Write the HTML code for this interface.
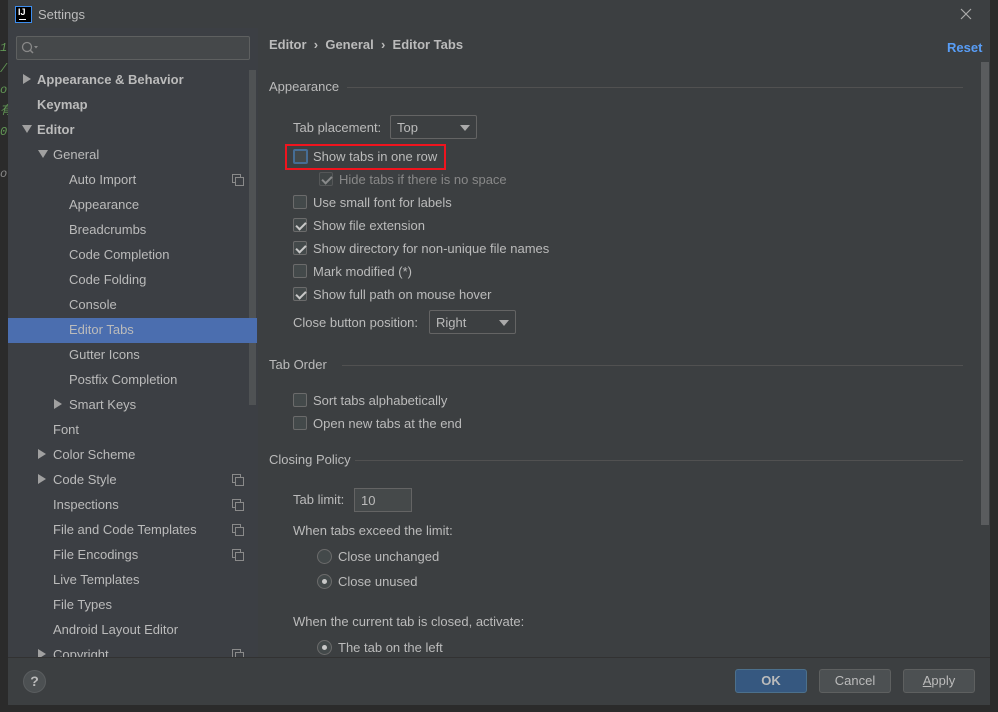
<!DOCTYPE html>
<html><head><meta charset="utf-8"><style>
*{margin:0;padding:0;box-sizing:border-box}
body{width:998px;height:712px;background:#2b2b2b;position:relative;overflow:hidden;font-family:"Liberation Sans","Noto Sans CJK SC",sans-serif;font-size:13px;color:#bbbbbb}
.a{position:absolute;white-space:nowrap}
.cb{position:absolute;width:14px;height:14px;border:1px solid #6b6b6b;border-radius:2px;background:#43494a}
.cb.on::after{content:"";position:absolute;left:4px;top:1px;width:4px;height:8px;border:solid #c8c8c8;border-width:0 2px 2px 0;transform:rotate(45deg)}
.rb{position:absolute;width:15px;height:15px;border:1px solid #6b6b6b;border-radius:50%;background:#43494a}
.rb.on::after{content:"";position:absolute;left:4px;top:4px;width:5px;height:5px;border-radius:50%;background:#c8c8c8}
.tri{position:absolute;width:0;height:0}
.tr{border-left:8px solid #a0a0a0;border-top:5px solid transparent;border-bottom:5px solid transparent}
.td{border-top:8px solid #a0a0a0;border-left:5px solid transparent;border-right:5px solid transparent}
.hd{position:absolute;height:1px;background:#515151}
.cp{position:absolute;width:9px;height:9px;border:1px solid #8a8a8a}
.cp::after{content:"";position:absolute;left:2px;top:2px;width:7px;height:7px;border:1px solid #8a8a8a;background:#3c3f44}
.row{position:absolute;height:25px;line-height:25px;white-space:nowrap}
</style></head><body>
<div class="a" style="left:0;top:38px;font-family:'Liberation Mono',monospace;color:#629755;font-style:italic;font-size:12px;line-height:21px">1<br>/<br>o<br>有<br>0<br><br><span style="color:#888">o</span></div>
<div class="a" style="left:8px;top:0;width:982px;height:705px;background:#3c3f41"></div>
<div class="a" style="left:15px;top:6px;width:17px;height:17px;background:#000;border:1px solid #3d8ef0"><div class="a" style="left:2px;top:0;color:#fff;font-size:9px;font-weight:bold">IJ</div><div class="a" style="left:3px;top:12px;width:7px;height:1px;background:#fff"></div></div>
<div class="a" style="left:38px;top:7px;font-size:13px">Settings</div>
<svg class="a" style="left:960px;top:8px" width="12" height="12"><path d="M1 1L11 11M11 1L1 11" stroke="#aaa" stroke-width="1.2"/></svg>
<div class="a" style="left:8px;top:28px;width:250px;height:629px;background:#3c3f44"></div>
<div class="a" style="left:16px;top:36px;width:234px;height:24px;border:1px solid #5e6060;border-radius:2px;background:#45484a"></div>
<svg class="a" style="left:21px;top:41px" width="18" height="14"><circle cx="6" cy="6" r="4.5" fill="none" stroke="#888" stroke-width="1.3"/><line x1="9" y1="9" x2="12" y2="12" stroke="#888" stroke-width="1.5"/><path d="M13 5h4l-2 2.5z" fill="#888"/></svg>
<div class="a" style="left:249px;top:70px;width:7px;height:335px;background:#4f5254"></div>
<div class="a" style="left:8px;top:318px;width:249px;height:25px;background:#4b6eaf"></div>
<div class="tri tr" style="left:23px;top:74px"></div>
<div class="row" style="left:37px;top:67px;font-weight:bold">Appearance &amp; Behavior</div>
<div class="row" style="left:37px;top:92px;font-weight:bold">Keymap</div>
<div class="tri td" style="left:22px;top:125px"></div>
<div class="row" style="left:37px;top:117px;font-weight:bold">Editor</div>
<div class="tri td" style="left:38px;top:150px"></div>
<div class="row" style="left:53px;top:142px">General</div>
<div class="row" style="left:69px;top:167px">Auto Import</div>
<div class="row" style="left:69px;top:192px">Appearance</div>
<div class="row" style="left:69px;top:217px">Breadcrumbs</div>
<div class="row" style="left:69px;top:242px">Code Completion</div>
<div class="row" style="left:69px;top:267px">Code Folding</div>
<div class="row" style="left:69px;top:292px">Console</div>
<div class="row" style="left:69px;top:317px">Editor Tabs</div>
<div class="row" style="left:69px;top:342px">Gutter Icons</div>
<div class="row" style="left:69px;top:367px">Postfix Completion</div>
<div class="row" style="left:69px;top:392px">Smart Keys</div>
<div class="row" style="left:53px;top:417px">Font</div>
<div class="row" style="left:53px;top:442px">Color Scheme</div>
<div class="row" style="left:53px;top:467px">Code Style</div>
<div class="row" style="left:53px;top:492px">Inspections</div>
<div class="row" style="left:53px;top:517px">File and Code Templates</div>
<div class="row" style="left:53px;top:542px">File Encodings</div>
<div class="row" style="left:53px;top:567px">Live Templates</div>
<div class="row" style="left:53px;top:592px">File Types</div>
<div class="row" style="left:53px;top:617px">Android Layout Editor</div>
<div class="row" style="left:53px;top:642px">Copyright</div>
<div class="tri tr" style="left:54px;top:399px"></div>
<div class="tri tr" style="left:38px;top:449px"></div>
<div class="tri tr" style="left:38px;top:474px"></div>
<div class="tri tr" style="left:38px;top:649px"></div>
<div class="cp" style="left:232px;top:174px"></div>
<div class="cp" style="left:232px;top:474px"></div>
<div class="cp" style="left:232px;top:499px"></div>
<div class="cp" style="left:232px;top:524px"></div>
<div class="cp" style="left:232px;top:549px"></div>
<div class="cp" style="left:232px;top:649px"></div>
<div class="a" style="left:8px;top:657px;width:250px;height:10px;background:#3c3f41"></div>
<div class="a" style="left:269px;top:37px;font-weight:bold">Editor &nbsp;›&nbsp; General &nbsp;›&nbsp; Editor Tabs</div>
<div class="a" style="left:947px;top:40px;font-weight:bold;color:#589df6">Reset</div>
<div class="a" style="left:981px;top:62px;width:8px;height:463px;background:#5a5c5e"></div>
<div class="a" style="left:269px;top:79px">Appearance</div><div class="hd" style="left:347px;top:87px;width:616px"></div>
<div class="a" style="left:293px;top:120px">Tab placement:</div>
<div class="a" style="left:390px;top:115px;width:87px;height:24px;border:1px solid #646464;border-radius:2px;background:#3c3f41;padding:4px 6px">Top</div>
<div class="tri td" style="left:460px;top:125px;border-top-color:#aaa;border-top-width:6px"></div>
<div class="a" style="left:285px;top:144px;width:161px;height:26px;border:2px solid #f0141e"></div>
<div class="cb" style="left:293px;top:149px;border-color:#466d94;border-width:2px;width:15px;height:15px"></div>
<div class="a" style="left:313px;top:149px">Show tabs in one row</div>
<div class="cb on" style="left:319px;top:172px;opacity:.55"></div><div class="a" style="left:339px;top:172px;color:#888">Hide tabs if there is no space</div>
<div class="cb" style="left:293px;top:195px"></div><div class="a" style="left:313px;top:195px">Use small font for labels</div>
<div class="cb on" style="left:293px;top:218px"></div><div class="a" style="left:313px;top:218px">Show file extension</div>
<div class="cb on" style="left:293px;top:241px"></div><div class="a" style="left:313px;top:241px">Show directory for non-unique file names</div>
<div class="cb" style="left:293px;top:264px"></div><div class="a" style="left:313px;top:264px">Mark modified (*)</div>
<div class="cb on" style="left:293px;top:287px"></div><div class="a" style="left:313px;top:287px">Show full path on mouse hover</div>
<div class="a" style="left:293px;top:315px">Close button position:</div>
<div class="a" style="left:429px;top:310px;width:87px;height:24px;border:1px solid #646464;border-radius:2px;padding:4px 6px">Right</div>
<div class="tri td" style="left:499px;top:320px;border-top-color:#aaa;border-top-width:6px"></div>
<div class="a" style="left:269px;top:357px">Tab Order</div><div class="hd" style="left:342px;top:365px;width:621px"></div>
<div class="cb" style="left:293px;top:393px"></div><div class="a" style="left:313px;top:393px">Sort tabs alphabetically</div>
<div class="cb" style="left:293px;top:416px"></div><div class="a" style="left:313px;top:416px">Open new tabs at the end</div>
<div class="a" style="left:269px;top:452px">Closing Policy</div><div class="hd" style="left:355px;top:460px;width:608px"></div>
<div class="a" style="left:293px;top:492px">Tab limit:</div>
<div class="a" style="left:354px;top:488px;width:58px;height:24px;border:1px solid #646464;background:#45494a;padding:4px 6px">10</div>
<div class="a" style="left:293px;top:523px">When tabs exceed the limit:</div>
<div class="rb" style="left:317px;top:549px"></div><div class="a" style="left:338px;top:549px">Close unchanged</div>
<div class="rb on" style="left:317px;top:574px"></div><div class="a" style="left:338px;top:574px">Close unused</div>
<div class="a" style="left:293px;top:614px">When the current tab is closed, activate:</div>
<div class="rb on" style="left:317px;top:640px"></div><div class="a" style="left:338px;top:640px">The tab on the left</div>
<div class="a" style="left:8px;top:657px;width:982px;height:48px;background:#3c3f41;border-top:1px solid #323232"></div>
<div class="a" style="left:23px;top:670px;width:23px;height:23px;border-radius:50%;background:#4c5052;border:1px solid #5a5d5f;text-align:center;font-weight:bold;font-size:14px;line-height:21px;color:#bbb">?</div>
<div class="a" style="left:735px;top:669px;width:72px;height:24px;background:#365880;border:1px solid #4c708c;border-radius:3px;text-align:center;line-height:22px;font-weight:bold">OK</div>
<div class="a" style="left:819px;top:669px;width:72px;height:24px;background:#4c5052;border:1px solid #5e6060;border-radius:3px;text-align:center;line-height:22px">Cancel</div>
<div class="a" style="left:903px;top:669px;width:72px;height:24px;background:#4c5052;border:1px solid #5e6060;border-radius:3px;text-align:center;line-height:22px"><u>A</u>pply</div>
</body></html>
